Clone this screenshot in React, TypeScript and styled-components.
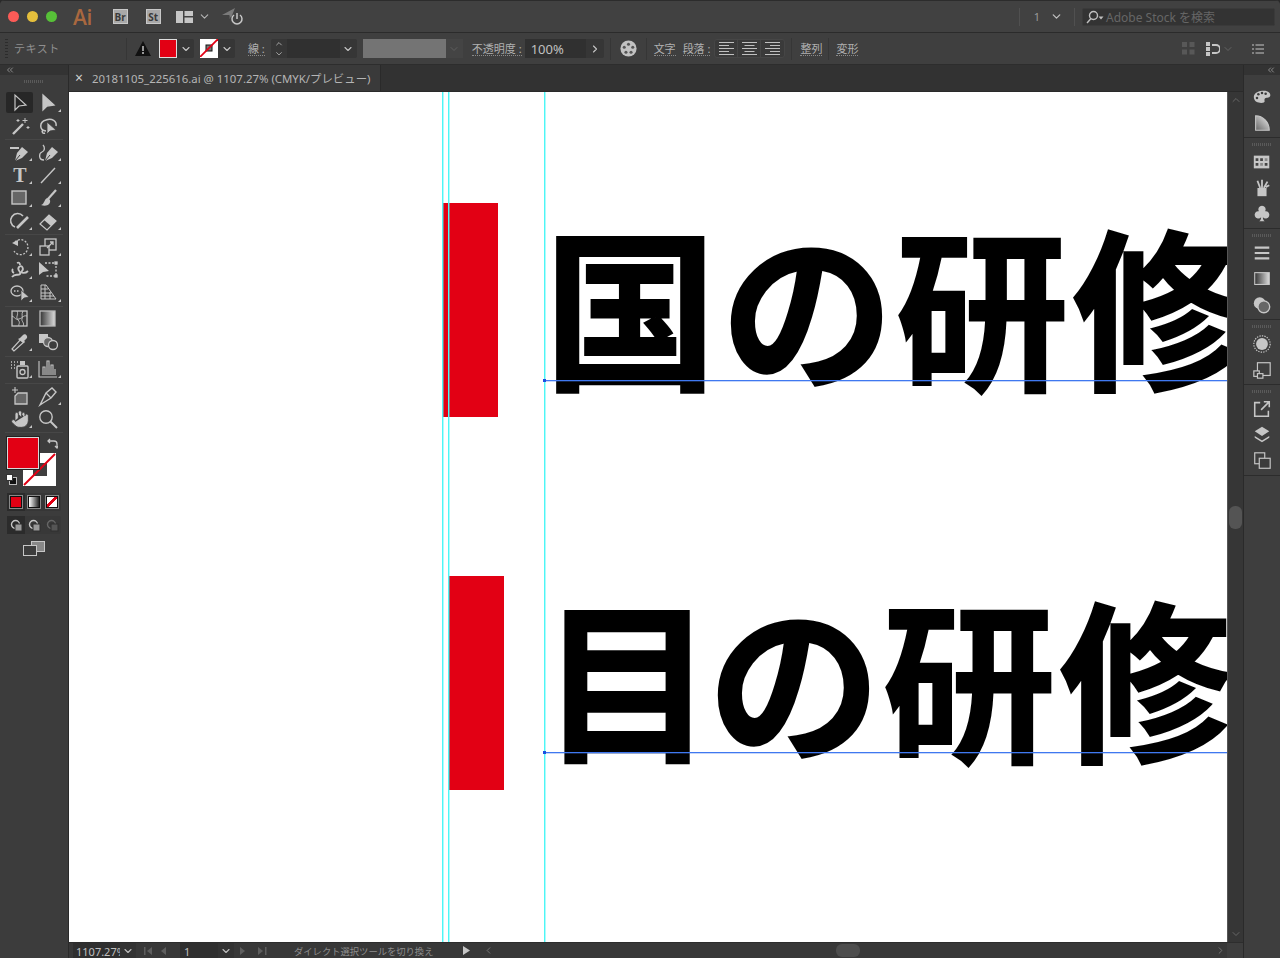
import React from "react";
import styled, { createGlobalStyle } from "styled-components";
import { ChevronDown, ChevronUp, ChevronRight, ChevronLeft, ChevronsLeft, Hand } from "lucide-react";

const UI_FONT = `"Noto Sans", "Noto Sans CJK JP", sans-serif`;

const Global = createGlobalStyle`
  html, body { margin: 0; padding: 0; background: #2a2a2a; }
  body { font-family: ${UI_FONT}; }
  * { box-sizing: border-box; }
`;

const Icon: React.FC<{ size?: number; children: React.ReactNode }> = ({ size = 22, children }) => (
  <svg width={size} height={size} viewBox="0 0 22 22" fill="none" stroke="#c6c6c6" strokeWidth="1.3">
    {children}
  </svg>
);

const toolIcons: Record<string, React.ReactNode> = {
  select: <path d="M6 3v15l4-4 7-1z" strokeWidth="1.2" />,
  direct: <path d="M6 3v15l4-4 7-1z" fill="#c6c6c6" />,
  wand: (
    <>
      <path d="M4 19 14 9" strokeWidth="2.4" />
      <path d="M16 3v5M13.5 5.500h5M9 4v3M7.500 5.500h3M19 11v3M17.500 12.500h3" strokeWidth="1" />
    </>
  ),
  lasso: (
    <>
      <path d="M9 16C2 15 2 7 9 5c6-2 11 1 10 6M6 15c-2 2 0 4 2 3" strokeWidth="1.5" />
      <path d="M10 7v12l3-3 6-1z" fill="#c6c6c6" stroke="#3c3c3c" strokeWidth=".8" />
    </>
  ),
  pen: (
    <>
      <path d="M1 7h9" strokeWidth="1.8" />
      <path d="M6 20l2-8 5-6 6 5-6 6z" fill="#c6c6c6" stroke="none" />
      <path d="M6 20l5-6" stroke="#3c3c3c" strokeWidth="1" />
    </>
  ),
  curve: (
    <>
      <path d="M7 19C1 19 2 12 5 11s3-5 1-7" strokeWidth="1.3" />
      <path d="M8 20l2-8 5-6 6 5-6 6z" fill="#c6c6c6" stroke="none" />
      <path d="M8 20l5-6" stroke="#3c3c3c" strokeWidth="1" />
    </>
  ),
  type: (
    <text x="11" y="18" textAnchor="middle" fontFamily="Liberation Serif, serif" fontWeight="700" fontSize="20" fill="#c6c6c6" stroke="none">
      T
    </text>
  ),
  line: <path d="M4 19 18 4" strokeWidth="1.4" />,
  rect: <rect x="3" y="4" width="14" height="13" fill="#666" strokeWidth="1.4" />,
  brush: (
    <>
      <path d="M19 3 11 12" strokeWidth="2.2" />
      <path d="M11 11c-4 0-3 6-7 7 6 2 10-1 9-5z" fill="#c6c6c6" stroke="none" />
    </>
  ),
  shaper: (
    <>
      <path d="M14 6A7 7 0 1 0 6 17" strokeWidth="1.6" />
      <path d="M8 18 19 7" strokeWidth="2.6" />
    </>
  ),
  eraser: (
    <>
      <path d="M3 14l9-9 7 6-9 9z" strokeWidth="1.2" />
      <path d="M7 10l5-5 7 6-5 5z" fill="#c6c6c6" stroke="none" />
    </>
  ),
  rotate: (
    <>
      <path d="M6 6a7.500 7.500 0 1 1-1 9" strokeDasharray="2 1.500" strokeWidth="1.3" />
      <path d="M3 7l6-3v6z" fill="#c6c6c6" stroke="none" />
    </>
  ),
  scale: (
    <>
      <rect x="8" y="3" width="11" height="11" />
      <rect x="3" y="10" width="9" height="9" fill="#3c3c3c" />
      <path d="M10 12 16 6M13 6h3v3" />
    </>
  ),
  warp: (
    <path
      d="M3 18c3-4 6-1 8-3s-4-4-1-7 5 2 3 4 3 3 6 0M8 4c2-1 3 0 3 2M5 14c-2-1-2-3-1-4"
      strokeWidth="1.8"
    />
  ),
  free: (
    <>
      <path d="M8 4h11v13H8" strokeDasharray="2 1.500" />
      <path d="M2 3v13l4-3 6-1z" fill="#c6c6c6" stroke="none" />
      <rect x="18" y="3" width="2" height="2" fill="#c6c6c6" />
      <rect x="18" y="16" width="2" height="2" fill="#c6c6c6" />
    </>
  ),
  builder: (
    <>
      <ellipse cx="8" cy="9" rx="6" ry="5" />
      <path d="M5 9h6" strokeDasharray="1.500 1.500" strokeWidth="1.600" />
      <path d="M12 8v11l3-3 5-1z" fill="#c6c6c6" stroke="#3c3c3c" strokeWidth=".7" />
    </>
  ),
  perspective: (
    <path d="M4 3h5l10 14H4zM4 7h7M4 11h10M4 14h13M8 3v14M13 10v7" strokeWidth="1" />
  ),
  mesh: (
    <>
      <rect x="3" y="3" width="15" height="15" />
      <path d="M3 8c4 2 3 4 7 3s4-4 8-3M8 3c2 4-2 6 1 9s0 4 1 6M14 3c-2 3 0 6-1 8s3 4 1 7" strokeWidth=".9" />
    </>
  ),
  gradient: <rect x="3" y="3" width="15" height="15" fill="url(#toolGrad)" stroke="#bbb" />,
  dropper: (
    <>
      <path d="M5 20 3 18l9-10 3 3z" strokeWidth="1.2" />
      <path d="M11 7l3-3c2-2 5 1 4 3l-3 3 1 1-2 1-5-4z" fill="#c6c6c6" stroke="none" />
    </>
  ),
  blend: (
    <>
      <rect x="2" y="3" width="9" height="9" fill="#c6c6c6" stroke="none" />
      <circle cx="11" cy="11" r="4.500" fill="#666" />
      <circle cx="16" cy="14" r="4.500" fill="#3c3c3c" />
    </>
  ),
  sprayer: (
    <>
      <rect x="8" y="8" width="11" height="12" rx="1" fill="#3c3c3c" strokeWidth="1.4" />
      <circle cx="13.500" cy="14" r="2.500" stroke="#c6c6c6" />
      <rect x="11" y="3" width="5" height="4" fill="#c6c6c6" stroke="none" />
      <path d="M2 4h1M5 4h1M8 4h1M2 7h1M5 7h1M2 10h1M5 10h1" strokeWidth="1.500" />
    </>
  ),
  graph: (
    <path d="M2 3v16h18M6 17V9h2v8M10 17V3h2v14M14 17V7h2v10M18 17v-6" strokeWidth="1.1" />
  ),
  artboard: (
    <>
      <path d="M6 2v6M3 5h6" strokeWidth="1.100" />
      <path d="M9 8h9v11H6V11z" fill="#666" stroke="#c6c6c6" />
    </>
  ),
  slice: (
    <>
      <path d="M3 20 9 8l6-5 4 4-5 6-8 5z" strokeWidth="1.400" />
      <path d="M9 8l5 5" strokeWidth="1.200" />
    </>
  ),
  zoom: (
    <>
      <circle cx="9" cy="9" r="6.200" strokeWidth="1.400" />
      <path d="M13.500 13.500 20 20" strokeWidth="2" />
    </>
  ),
};

type ToolDef = { id: string; more?: boolean; active?: boolean };

const toolGroups: { tail: number; tools: ToolDef[] }[] = [
  { tail: 2, tools: [{ id: "select", active: true }, { id: "direct", more: true }, { id: "wand" }, { id: "lasso" }] },
  {
    tail: 2,
    tools: [
      { id: "pen", more: true },
      { id: "curve", more: true },
      { id: "type", more: true },
      { id: "line", more: true },
      { id: "rect", more: true },
      { id: "brush", more: true },
      { id: "shaper", more: true },
      { id: "eraser", more: true },
    ],
  },
  {
    tail: 2,
    tools: [
      { id: "rotate", more: true },
      { id: "scale", more: true },
      { id: "warp", more: true },
      { id: "free" },
      { id: "builder", more: true },
      { id: "perspective", more: true },
    ],
  },
  { tail: 3, tools: [{ id: "mesh" }, { id: "gradient" }, { id: "dropper", more: true }, { id: "blend" }] },
  { tail: 3, tools: [{ id: "sprayer", more: true }, { id: "graph", more: true }] },
  { tail: 2, tools: [{ id: "artboard" }, { id: "slice", more: true }, { id: "hand", more: true }, { id: "zoom" }] },
];

const dockIcons: Record<string, React.ReactNode> = {
  palette: (
    <>
      <path d="M2 11c0-5 6-7 11-7s8 3 7 6-5 1-6 3 1 3-1 4-11 1-11-6z" fill="#c6c6c6" stroke="none" />
      <g fill="#3c3c3c" stroke="none">
        <circle cx="7" cy="8" r="1.400" />
        <circle cx="11" cy="6.500" r="1.400" />
        <circle cx="15" cy="7.500" r="1.400" />
        <circle cx="5.500" cy="12" r="1.400" />
      </g>
    </>
  ),
  wedge: <path d="M4 3c8 0 15 7 15 16H4z" fill="url(#dockWedge)" stroke="#c6c6c6" strokeWidth="1.200" />,
  swatches: (
    <>
      <rect x="2" y="4" width="17" height="14" fill="#c6c6c6" stroke="none" />
      <path d="M4 7h3v3H4zM4 12h3v3H4zM9 7h3v3H9zM14 12h3v3h-3z" fill="#444" stroke="none" />
      <path d="M9 12h3v3H9zM14 7h3v3h-3z" fill="#888" stroke="none" />
    </>
  ),
  brushes: (
    <>
      <path d="M6 11h10v9H6z" fill="#c6c6c6" stroke="none" />
      <path d="M9 11 6 3M11 11V2M13 11l4-7M15 10l4-2" strokeWidth="2" />
    </>
  ),
  club: (
    <path
      d="M11 2a4 4 0 0 1 3.500 6A4 4 0 1 1 12 14.500c0 2 .5 3 2 4.500H8c1.500-1.500 2-2.500 2-4.500A4 4 0 1 1 7.500 8 4 4 0 0 1 11 2z"
      fill="#c6c6c6"
      stroke="none"
    />
  ),
  lines: <path d="M3 5h16M3 11h16M3 17h16" strokeWidth="2.400" />,
  gradRect: <rect x="3" y="4" width="16" height="13" fill="url(#toolGrad)" stroke="#c6c6c6" strokeWidth="1.200" />,
  overlap: (
    <>
      <circle cx="8.500" cy="9" r="6.500" fill="#c6c6c6" stroke="none" />
      <circle cx="13" cy="13" r="6.500" fill="#666" stroke="#c6c6c6" strokeWidth="1.500" />
    </>
  ),
  dotted: (
    <>
      <circle cx="11" cy="11" r="6.500" fill="#c6c6c6" stroke="none" />
      <circle cx="11" cy="11" r="9" strokeDasharray="1.500 1.300" strokeWidth="1.300" />
    </>
  ),
  corner: (
    <>
      <rect x="6" y="3" width="14" height="14" strokeWidth="1.300" />
      <rect x="2" y="12" width="6" height="6" fill="#3c3c3c" />
      <rect x="6" y="15" width="6" height="5" fill="#3c3c3c" />
    </>
  ),
  exportIcon: (
    <>
      <path d="M9 4H3v15h15v-6" strokeWidth="1.700" />
      <path d="M10 12 18 4M13 3h6v6" strokeWidth="1.700" />
    </>
  ),
  layers: (
    <>
      <path d="M11 2l8 5-8 5-8-5z" fill="#c6c6c6" stroke="none" />
      <path d="M3 12l8 5 8-5v2l-8 5-8-5z" fill="#c6c6c6" stroke="none" />
    </>
  ),
  artboards: (
    <>
      <rect x="3" y="2" width="11" height="12" strokeWidth="1.300" />
      <rect x="8" y="8" width="12" height="11" fill="#3c3c3c" strokeWidth="1.300" />
    </>
  ),
};

const dockGroups = [
  ["palette", "wedge"],
  ["swatches", "brushes", "club"],
  ["lines", "gradRect", "overlap"],
  ["dotted", "corner"],
  ["exportIcon", "layers", "artboards"],
];

export default function App() {
  return (
    <Window>
      <Global />
      <svg width="0" height="0">
        <defs>
          <linearGradient id="toolGrad" x1="0" x2="1" y1="0" y2="0">
            <stop offset="0" stopColor="#333" />
            <stop offset="1" stopColor="#ddd" />
          </linearGradient>
          <linearGradient id="dockWedge" x1="1" x2="0" y1="0" y2="1">
            <stop offset="0" stopColor="#eee" />
            <stop offset="1" stopColor="#666" />
          </linearGradient>
        </defs>
      </svg>

      <TitleBar>
        <Light $color="#fc5b57" />
        <Light $color="#e5bf3c" />
        <Light $color="#57c038" />
        <AiLogo>Ai</AiLogo>
        <AppBadge $left={21}>Br</AppBadge>
        <AppBadge $left={18}>St</AppBadge>
        <LayoutIcon width="17" height="12" viewBox="0 0 17 12">
          <rect width="7" height="12" fill="#c6c6c6" />
          <rect x="8.500" width="8.500" height="5" fill="#c6c6c6" />
          <rect x="8.500" y="6.500" width="8.500" height="5.500" fill="#c6c6c6" />
        </LayoutIcon>
        <SmallChevron><ChevronDown size={13} color="#b5b5b5" strokeWidth={2} /></SmallChevron>
        <SyncIcon width="21" height="20" viewBox="0 0 21 20" fill="none">
          <path d="M0 8 13 1 9 11 7 8z" fill="#7a7a7a" />
          <path d="M7 12 9 11 7 8z" fill="#555" />
          <path d="M12 8a5 5 0 1 0 6 0" stroke="#c6c6c6" strokeWidth="1.500" />
          <path d="M15 6v6" stroke="#c6c6c6" strokeWidth="1.500" />
        </SyncIcon>
        <Spacer />
        <BarDivider />
        <PageNumber>1</PageNumber>
        <ChevronDown size={13} color="#c0c0c0" strokeWidth={2.400} />
        <BarDivider $gap={11} />
        <SearchBox>
          <svg width="18" height="14" viewBox="0 0 18 14" fill="none" stroke="#c0c0c0" strokeWidth="1.400">
            <circle cx="7.500" cy="5.500" r="4" />
            <path d="M5 8.500 1 13" />
            <path d="M12.500 6.500h5l-2.500 3z" fill="#c0c0c0" stroke="none" />
          </svg>
          <SearchText>Adobe Stock を検索</SearchText>
        </SearchBox>
      </TitleBar>

      <ControlBar>
        <BarGrip />
        <SelectionLabel>テキスト</SelectionLabel>
        <ControlDivider $left={68} />
        <WarningIcon width="16" height="15" viewBox="0 0 16 15">
          <path d="M8 0 16 15H0z" fill="#111" />
          <path d="M7.200 5h1.600v5H7.200zM7.200 11h1.600v2H7.200z" fill="#bbb" />
        </WarningIcon>
        <SwatchField $left={8}>
          <FillSwatch />
          <FieldChevron />
        </SwatchField>
        <SwatchField $left={6}>
          <StrokeSwatch>
            <svg width="18" height="18" viewBox="0 0 18 18">
              <rect x="6" y="6" width="6" height="6" fill="#777" stroke="#111" />
              <path d="M0 18 18 0" stroke="#e20014" strokeWidth="1.800" />
            </svg>
          </StrokeSwatch>
          <FieldChevron />
        </SwatchField>
        <UnderLabel $left={13}>線 :</UnderLabel>
        <StrokeGroup>
          <Spinner>
            <ChevronUp size={10} color="#c0c0c0" strokeWidth={2} />
            <ChevronDown size={10} color="#c0c0c0" strokeWidth={2} />
          </Spinner>
          <StrokeInput />
          <FieldChevron />
        </StrokeGroup>
        <GrayField />
        <DimChevron><ChevronDown size={12} color="#5e5e5e" strokeWidth={2} /></DimChevron>
        <UnderLabel $left={9}>不透明度 :</UnderLabel>
        <OpacityGroup>
          <OpacityValue>100%</OpacityValue>
          <OpacityArrow><ChevronRight size={12} color="#c6c6c6" strokeWidth={2.200} /></OpacityArrow>
        </OpacityGroup>
        <ControlDivider $left={6} />
        <GlobeIcon width="17" height="17" viewBox="0 0 20 20">
          <circle cx="10" cy="10" r="9.500" fill="#c2c2c2" />
          <g fill="#555">
            <circle cx="10" cy="5" r="1.800" />
            <circle cx="15" cy="8.500" r="1.800" />
            <circle cx="13" cy="14.500" r="1.800" />
            <circle cx="7" cy="14.500" r="1.800" />
            <circle cx="5" cy="8.500" r="1.800" />
          </g>
        </GlobeIcon>
        <ControlDivider $left={9} />
        <UnderLabel $left={7}>文字</UnderLabel>
        <UnderLabel $left={7}>段落 :</UnderLabel>
        <AlignGroup>
          {["left", "center", "right"].map((a) => (
            <AlignCell key={a}>
              <svg width="15" height="13" viewBox="0 0 15 13" stroke="#c0c0c0" strokeWidth="1">
                {a === "left" && <path d="M0 .5h15M0 3.500h10M0 6.500h15M0 9.500h10M0 12.500h15" />}
                {a === "center" && <path d="M0 .5h15M2.500 3.500h10M0 6.500h15M2.500 9.500h10M0 12.500h15" />}
                {a === "right" && <path d="M0 .5h15M5 3.500h10M0 6.500h15M5 9.500h10M0 12.500h15" />}
              </svg>
            </AlignCell>
          ))}
        </AlignGroup>
        <ControlDivider $left={6} />
        <UnderLabel $left={8}>整列</UnderLabel>
        <ControlDivider $left={6} />
        <UnderLabel $left={7}>変形</UnderLabel>
        <Spacer />
        <svg width="13" height="13" viewBox="0 0 13 13" fill="#585858">
          <rect width="5" height="5" />
          <rect x="7.500" width="5" height="5" />
          <rect y="7.500" width="5" height="5" />
          <rect x="7.500" y="7.500" width="5" height="5" />
        </svg>
        <RightAlignIcon width="14" height="14" viewBox="0 0 14 14">
          <path d="M0 0h4v4H0zM0 5h4v4H0zM0 10h4v4H0z" fill="#c6c6c6" />
          <path d="M6 3h4a3 3 0 0 1 0 8H6" fill="none" stroke="#c6c6c6" strokeWidth="1.800" />
        </RightAlignIcon>
        <DimChevronRight><ChevronDown size={12} color="#666" strokeWidth={1.800} /></DimChevronRight>
        <MenuIcon width="12" height="10" viewBox="0 0 12 10" stroke="#c6c6c6" strokeWidth="1.200">
          <path d="M0 1h2M0 5h2M0 9h2M3.500 1H12M3.500 5H12M3.500 9H12" />
        </MenuIcon>
      </ControlBar>

      <Workspace>
        <ToolPanel>
          <CollapseStrip>
            <ChevronsLeft size={10} color="#9a9a9a" strokeWidth={2} />
          </CollapseStrip>
          <ToolGrip />
          {toolGroups.map((group, i) => (
            <ToolGroup key={i} $tail={group.tail}>
              {group.tools.map((t) => (
                <ToolButton key={t.id} $active={t.active} $more={t.more}>
                  {t.id === "hand" ? (
                    <Hand size={20} color="#3c3c3c" fill="#c6c6c6" strokeWidth={1} />
                  ) : (
                    <Icon>{toolIcons[t.id]}</Icon>
                  )}
                </ToolButton>
              ))}
            </ToolGroup>
          ))}
          <ColorWell>
            <StrokeBox>
              <svg width="33" height="33" viewBox="0 0 33 33">
                <rect x="10" y="10" width="14" height="13" fill="#3f3f3f" />
                <path d="M1 32 32 1" stroke="#e20014" strokeWidth="2" />
              </svg>
            </StrokeBox>
            <FillBox />
            <SwapIcon width="11" height="11" viewBox="0 0 11 11" fill="none" stroke="#c6c6c6" strokeWidth="1.300">
              <path d="M1 3h6a3 3 0 0 1 3 3v4M8 8l2 2 1-2M3 1 1 3l2 2" />
            </SwapIcon>
            <DefaultIcon>
              <DefaultBack />
              <DefaultFront />
            </DefaultIcon>
          </ColorWell>
          <ModeRow>
            <ModeCell $active><ModeFill $kind="solid" /></ModeCell>
            <ModeCell><ModeFill $kind="gradient" /></ModeCell>
            <ModeCell><ModeFill $kind="none" /></ModeCell>
          </ModeRow>
          <DrawRow>
            {[0, 1, 2].map((i) => (
              <DrawCell key={i} $active={i === 0}>
                <svg width="13" height="13" viewBox="0 0 13 13" fill="none">
                  <circle cx="5.500" cy="5.500" r="4" stroke={i === 2 ? "#666" : "#c6c6c6"} strokeWidth="1.400" />
                  <rect x="5" y="5" width="7" height="7" fill={i === 2 ? "#555" : "#9a9a9a"} stroke="#2e2e2e" />
                </svg>
              </DrawCell>
            ))}
          </DrawRow>
          <ScreenMode>
            <svg width="22" height="15" viewBox="0 0 22 15" fill="none" stroke="#c6c6c6" strokeWidth="1">
              <rect x="8.500" y=".5" width="13" height="10" fill="#888" />
              <rect x=".5" y="4.500" width="13" height="10" fill="#3c3c3c" />
            </svg>
          </ScreenMode>
        </ToolPanel>

        <Main>
          <TabBar>
            <DocTab>
              <CloseMark>×</CloseMark>
              <TabTitle>20181105_225616.ai @ 1107.27% (CMYK/プレビュー)</TabTitle>
            </DocTab>
          </TabBar>
          <CanvasRow>
            <Canvas>
              <RedBar $left={374} $top={111} />
              <RedBar $left={380} $top={484} />
              <Heading $left={475} $top={123}>国の研修</Heading>
              <Heading $left={472} $top={495}>
                <TightGlyph>目</TightGlyph>の研修
              </Heading>
              <Guide $left={373} />
              <Guide $left={379} />
              <Guide $left={475} />
              <Baseline $top={288} />
              <Baseline $top={660} />
            </Canvas>
            <VScroll>
              <ChevronUp size={12} color="#666" strokeWidth={2} />
              <VThumb />
              <ChevronDown size={12} color="#666" strokeWidth={2} />
            </VScroll>
          </CanvasRow>
          <StatusBar>
            <ZoomBox>1107.27%</ZoomBox>
            <StatusChevron><ChevronDown size={12} color="#c0c0c0" strokeWidth={2.200} /></StatusChevron>
            <NavIcons>
              <svg width="28" height="10" viewBox="0 0 28 10" fill="#5e5e5e">
                <path d="M0 1h1.500v8H0zM8 1v8L3 5zM22 1v8l-5-4z" />
              </svg>
            </NavIcons>
            <PageBox>1</PageBox>
            <StatusChevron><ChevronDown size={12} color="#c0c0c0" strokeWidth={2.200} /></StatusChevron>
            <NavIcons>
              <svg width="32" height="10" viewBox="0 0 32 10" fill="#5e5e5e">
                <path d="M0 1v8l5-4zM18 1v8l5-4zM25 1h1.500v8H25z" />
              </svg>
            </NavIcons>
            <StatusMessage>ダイレクト選択ツールを切り換え</StatusMessage>
            <PlayMark width="7" height="9" viewBox="0 0 7 9">
              <path d="M0 0v9l7-4.500z" fill="#c6c6c6" />
            </PlayMark>
            <ChevronLeft size={11} color="#777" strokeWidth={2} />
            <HScroll>
              <HThumb />
            </HScroll>
            <ChevronRight size={11} color="#777" strokeWidth={2} />
            <ScrollCorner />
          </StatusBar>
        </Main>

        <Dock>
          <DockHead>
            <ChevronsLeft size={10} color="#9a9a9a" strokeWidth={2} />
          </DockHead>
          {dockGroups.map((group, i) => (
            <DockGroup key={i} $first={i === 0}>
              {i > 0 && <PanelGrip />}
              {group.map((id) => (
                <DockButton key={id}>
                  <Icon size={20}>{dockIcons[id]}</Icon>
                </DockButton>
              ))}
            </DockGroup>
          ))}
        </Dock>
      </Workspace>
    </Window>
  );
}

const Window = styled.div`
  width: 1280px;
  height: 958px;
  display: flex;
  flex-direction: column;
  overflow: hidden;
  background: #3c3c3c;
  border-radius: 5px 5px 0 0;
  color: #b5b5b5;
  font-family: ${UI_FONT};
  & > svg:first-of-type { position: absolute; }
`;

const TitleBar = styled.div`
  height: 33px;
  flex: none;
  display: flex;
  align-items: center;
  padding: 0 5px 0 8px;
  background: #414141;
  border-top: 1px solid #2c2c2c;
  border-bottom: 1px solid #2b2b2b;
`;

const Light = styled.span<{ $color: string }>`
  width: 11px;
  height: 11px;
  margin-right: 8px;
  border-radius: 50%;
  background: ${(p) => p.$color};
`;

const AiLogo = styled.span`
  margin-left: 8px;
  font: 600 21px "Open Sans", sans-serif;
  color: #a9683f;
  letter-spacing: -0.5px;
`;

const AppBadge = styled.span<{ $left: number }>`
  width: 15px;
  height: 15px;
  margin-left: ${(p) => p.$left}px;
  display: flex;
  align-items: center;
  justify-content: center;
  background: #a8a8a8;
  border: 1px solid #c8c8c8;
  color: #3a3a3a;
  font: 700 10px "Open Sans", sans-serif;
`;

const LayoutIcon = styled.svg`
  margin-left: 15px;
`;

const SmallChevron = styled.span`
  display: flex;
  margin-left: 5px;
`;

const SyncIcon = styled.svg`
  margin-left: 11px;
`;

const Spacer = styled.div`
  flex: 1;
`;

const BarDivider = styled.span<{ $gap?: number }>`
  width: 1px;
  height: 18px;
  margin: 0 ${(p) => p.$gap ?? 0}px 0 ${(p) => p.$gap ?? 0}px;
  background: #505050;
`;

const PageNumber = styled.span`
  margin: 0 10px 0 14px;
  font-size: 11px;
  color: #9a9a9a;
`;

const SearchBox = styled.div`
  width: 193px;
  height: 18px;
  margin-left: -4px;
  display: flex;
  align-items: center;
  gap: 2px;
  padding-left: 3px;
  background: #333;
  border: 1px solid #3a3a3a;
  border-radius: 2px;
`;

const SearchText = styled.span`
  font-size: 12px;
  color: #666;
`;

const ControlBar = styled.div`
  height: 32px;
  flex: none;
  display: flex;
  align-items: center;
  padding: 0 16px 0 5px;
  background: #3f3f3f;
  border-bottom: 1px solid #2d2d2d;
`;

const BarGrip = styled.span`
  width: 3px;
  height: 20px;
  background: repeating-linear-gradient(#2c2c2c 0 1px, transparent 1px 3px);
`;

const SelectionLabel = styled.span`
  margin-left: 6px;
  width: 44px;
  font-size: 11px;
  line-height: 15px;
  letter-spacing: 0.5px;
  color: #8f8f8f;
  white-space: nowrap;
`;

const ControlDivider = styled.span<{ $left: number }>`
  width: 1px;
  height: 22px;
  margin-left: ${(p) => p.$left}px;
  background: #363636;
`;

const WarningIcon = styled.svg`
  margin-left: 8px;
`;

const SwatchField = styled.div<{ $left: number }>`
  height: 19px;
  margin-left: ${(p) => p.$left}px;
  display: flex;
  background: #363636;
  border-radius: 2px;
`;

const FillSwatch = styled.span`
  width: 18px;
  height: 19px;
  background: #e20014;
  border: 1px solid #ddd;
`;

const StrokeSwatch = styled.span`
  width: 18px;
  height: 19px;
  background: #fff;
  display: flex;
`;

const FieldChevronBox = styled.span`
  width: 17px;
  display: flex;
  align-items: center;
  justify-content: center;
`;

const FieldChevron = () => (
  <FieldChevronBox>
    <ChevronDown size={12} color="#c6c6c6" strokeWidth={2.200} />
  </FieldChevronBox>
);

const UnderLabel = styled.span<{ $left: number }>`
  margin-left: ${(p) => p.$left}px;
  font-size: 11px;
  line-height: 13px;
  color: #b0b0b0;
  white-space: nowrap;
  border-bottom: 1px dotted #8a8a8a;
`;

const StrokeGroup = styled.div`
  height: 19px;
  margin-left: 6px;
  display: flex;
  background: #363636;
  border-radius: 2px;
`;

const Spinner = styled.span`
  width: 16px;
  display: flex;
  flex-direction: column;
  align-items: center;
  justify-content: center;
  gap: 0;
`;

const StrokeInput = styled.span`
  width: 53px;
  background: #303030;
`;

const GrayField = styled.div`
  width: 83px;
  height: 19px;
  margin-left: 6px;
  background: #747474;
`;

const DimChevron = styled.span`
  width: 17px;
  height: 19px;
  display: flex;
  align-items: center;
  justify-content: center;
  background: #444;
`;

const OpacityGroup = styled.div`
  height: 19px;
  margin-left: 3px;
  display: flex;
  background: #363636;
  border-radius: 2px;
`;

const OpacityValue = styled.span`
  width: 61px;
  padding-left: 6px;
  background: #303030;
  font-size: 13px;
  line-height: 20px;
  color: #c0c0c0;
`;

const OpacityArrow = styled.span`
  width: 18px;
  display: flex;
  align-items: center;
  justify-content: center;
`;

const GlobeIcon = styled.svg`
  margin-left: 9px;
`;

const AlignGroup = styled.div`
  height: 19px;
  margin-left: 4px;
  display: flex;
  background: #3a3a3a;
  border: 1px solid #464646;
  border-radius: 3px;
`;

const AlignCell = styled.span`
  width: 23px;
  display: flex;
  align-items: center;
  justify-content: center;
  border-right: 1px solid #464646;
  &:last-child { border-right: 0; }
`;

const RightAlignIcon = styled.svg`
  margin-left: 11px;
`;

const DimChevronRight = styled.span`
  display: flex;
  margin-left: 2px;
`;

const MenuIcon = styled.svg`
  margin-left: 18px;
`;

const Workspace = styled.div`
  flex: 1;
  min-height: 0;
  display: flex;
`;

const ToolPanel = styled.div`
  width: 69px;
  flex: none;
  display: flex;
  flex-direction: column;
  background: #3c3c3c;
  border-right: 1px solid #2a2a2a;
`;

const CollapseStrip = styled.div`
  height: 10px;
  display: flex;
  align-items: center;
  padding-left: 5px;
  background: #333;
`;

const PanelGrip = styled.div`
  width: 20px;
  height: 3px;
  margin: 5px auto 3px;
  background: repeating-linear-gradient(90deg, #5a5a5a 0 1px, transparent 1px 2px);
`;

const ToolGrip = styled(PanelGrip)`
  margin-bottom: 8px;
`;

const ToolGroup = styled.div<{ $tail: number }>`
  display: grid;
  grid-template-columns: 27px 29px;
  grid-auto-rows: 23px;
  justify-content: center;
  padding-bottom: ${(p) => p.$tail}px;
  margin: 0 5px;
  border-bottom: 1px solid #474747;
`;

const ToolButton = styled.div<{ $active?: boolean; $more?: boolean }>`
  position: relative;
  height: 21px;
  align-self: center;
  display: flex;
  align-items: center;
  justify-content: center;
  border-radius: 2px;
  background: ${(p) => (p.$active ? "#272727" : "transparent")};
  &::after {
    content: "";
    display: ${(p) => (p.$more ? "block" : "none")};
    position: absolute;
    right: 1px;
    bottom: 1px;
    border-left: 3px solid transparent;
    border-bottom: 3px solid #c6c6c6;
  }
`;

const ColorWell = styled.div`
  position: relative;
  height: 54px;
  margin-top: 4px;
  flex: none;
`;

const FillBox = styled.div`
  position: absolute;
  left: 7px;
  top: 0;
  width: 32px;
  height: 32px;
  background: #e20014;
  border: 1px solid #d8d8d8;
  box-shadow: 0 0 0 1px #222;
`;

const StrokeBox = styled.div`
  position: absolute;
  left: 23px;
  top: 16px;
  width: 33px;
  height: 33px;
  background: #fff;
  display: flex;
`;

const SwapIcon = styled.svg`
  position: absolute;
  left: 47px;
  top: 1px;
`;

const DefaultIcon = styled.div`
  position: absolute;
  left: 6px;
  top: 37px;
  width: 11px;
  height: 11px;
`;

const DefaultBack = styled.span`
  position: absolute;
  right: 0;
  bottom: 0;
  width: 8px;
  height: 8px;
  background: #111;
  border: 1px solid #bbb;
`;

const DefaultFront = styled.span`
  position: absolute;
  left: 0;
  top: 0;
  width: 7px;
  height: 7px;
  background: #fff;
  border: 1px solid #333;
`;

const ModeRow = styled.div`
  height: 18px;
  margin: 2px 7px 0;
  display: flex;
  background: #363636;
  border-radius: 2px;
`;

const ModeCell = styled.div<{ $active?: boolean }>`
  flex: 1;
  display: flex;
  align-items: center;
  justify-content: center;
  background: ${(p) => (p.$active ? "#2b2b2b" : "transparent")};
`;

const ModeFill = styled.span<{ $kind: "solid" | "gradient" | "none" }>`
  width: 12px;
  height: 12px;
  border: 1px solid #111;
  box-shadow: 0 0 0 1px #888;
  background: ${(p) =>
    p.$kind === "solid"
      ? "#e20014"
      : p.$kind === "gradient"
        ? "linear-gradient(90deg, #fff, #222)"
        : "linear-gradient(135deg, #fff 0 40%, #e20014 40% 60%, #fff 60%)"};
`;

const DrawRow = styled.div`
  height: 18px;
  margin: 5px 7px 0;
  display: flex;
  background: #383838;
  border-radius: 2px;
`;

const DrawCell = styled.div<{ $active?: boolean }>`
  flex: 1;
  display: flex;
  align-items: center;
  justify-content: center;
  background: ${(p) => (p.$active ? "#2b2b2b" : "transparent")};
`;

const ScreenMode = styled.div`
  margin-top: 7px;
  display: flex;
  justify-content: center;
`;

const Main = styled.div`
  flex: 1;
  min-width: 0;
  display: flex;
  flex-direction: column;
`;

const TabBar = styled.div`
  height: 27px;
  flex: none;
  display: flex;
  background: #323232;
  border-bottom: 1px solid #2a2a2a;
`;

const DocTab = styled.div`
  width: 312px;
  display: flex;
  align-items: center;
  padding-left: 6px;
  background: #3a3a3a;
  border-right: 1px solid #2a2a2a;
`;

const CloseMark = styled.span`
  width: 17px;
  font-size: 14px;
  line-height: 14px;
  color: #d0d0d0;
`;

const TabTitle = styled.span`
  font-size: 11.400px;
  color: #b5b5b5;
  white-space: nowrap;
`;

const CanvasRow = styled.div`
  flex: 1;
  min-height: 0;
  display: flex;
`;

const Canvas = styled.div`
  position: relative;
  flex: 1;
  overflow: hidden;
  background: #fff;
`;

const RedBar = styled.div<{ $left: number; $top: number }>`
  position: absolute;
  left: ${(p) => p.$left}px;
  top: ${(p) => p.$top}px;
  width: 55px;
  height: 214px;
  background: #e20014;
`;

const Heading = styled.div<{ $left: number; $top: number }>`
  position: absolute;
  left: ${(p) => p.$left}px;
  top: ${(p) => p.$top}px;
  font: 700 173px/1 "Noto Sans CJK JP", sans-serif;
  font-feature-settings: "palt";
  letter-spacing: 4px;
  -webkit-text-stroke: 2px #000;
  color: #000;
  white-space: nowrap;
`;

const TightGlyph = styled.span`
  letter-spacing: -6px;
`;

const Guide = styled.div<{ $left: number }>`
  position: absolute;
  left: ${(p) => p.$left}px;
  top: 0;
  bottom: 0;
  width: 1px;
  background: #4df6f6;
  box-shadow: 1px 0 0 rgba(77, 246, 246, 0.45);
`;

const Baseline = styled.div<{ $top: number }>`
  position: absolute;
  left: 474px;
  right: 0;
  top: ${(p) => p.$top}px;
  height: 1px;
  background: #3f78f0;
  box-shadow: 0 1px 0 rgba(63, 120, 240, 0.3);
  &::before {
    content: "";
    position: absolute;
    left: 0;
    top: -1px;
    width: 3px;
    height: 3px;
    background: #1c4fe0;
  }
`;

const VScroll = styled.div`
  width: 16px;
  flex: none;
  display: flex;
  flex-direction: column;
  align-items: center;
  justify-content: space-between;
  padding: 2px 0;
  position: relative;
  background: #363636;
  border-left: 1px solid #555;
`;

const VThumb = styled.div`
  width: 13px;
  height: 23px;
  border-radius: 6px;
  background: #545454;
`;

const StatusBar = styled.div`
  height: 16px;
  flex: none;
  display: flex;
  align-items: center;
  padding-left: 4px;
  background: #383838;
  border-top: 1px solid #2d2d2d;
`;

const ZoomBox = styled.span`
  width: 47px;
  height: 15px;
  overflow: hidden;
  padding-left: 3px;
  font-size: 11px;
  line-height: 17px;
  white-space: nowrap;
  color: #c0c0c0;
  background: #2f2f2f;
`;

const StatusChevron = styled.span`
  width: 16px;
  height: 15px;
  display: flex;
  align-items: center;
  justify-content: center;
  background: #333;
`;

const NavIcons = styled.span`
  width: 44px;
  display: flex;
  justify-content: center;
`;

const PageBox = styled.span`
  width: 38px;
  height: 15px;
  padding-left: 4px;
  font-size: 11px;
  line-height: 17px;
  color: #c0c0c0;
  background: #2f2f2f;
`;

const StatusMessage = styled.span`
  width: 185px;
  padding-left: 16px;
  font-size: 9.300px;
  white-space: nowrap;
  color: #8d8d8d;
`;

const PlayMark = styled.svg`
  margin: 0 13px 0 0;
  flex: none;
`;

const HScroll = styled.div`
  flex: 1;
  display: flex;
  padding-left: 342px;
`;

const HThumb = styled.span`
  width: 24px;
  height: 13px;
  border-radius: 6px;
  background: #4d4d4d;
`;

const ScrollCorner = styled.span`
  width: 16px;
  height: 15px;
  margin-left: 1px;
  background: #3e3e3e;
`;

const Dock = styled.div`
  width: 37px;
  flex: none;
  display: flex;
  flex-direction: column;
  background: #3e3e3e;
  border-left: 1px solid #2a2a2a;
`;

const DockHead = styled.div`
  height: 10px;
  display: flex;
  align-items: center;
  justify-content: flex-end;
  padding-right: 4px;
  background: #333;
`;

const DockGroup = styled.div<{ $first?: boolean }>`
  padding: ${(p) => (p.$first ? "9px" : "0")} 0 1px;
  border-bottom: 1px solid #2c2c2c;
`;

const DockButton = styled.div`
  height: 26px;
  display: flex;
  align-items: center;
  justify-content: center;
`;
